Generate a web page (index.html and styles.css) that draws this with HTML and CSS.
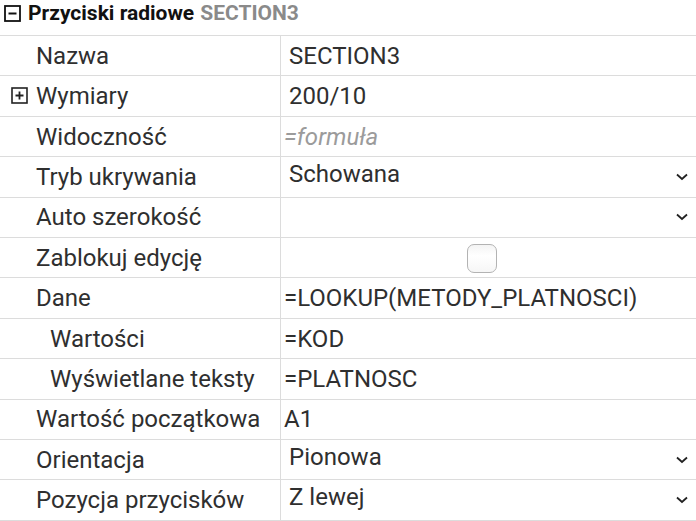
FILE: index.html
```html
<!DOCTYPE html>
<html lang="pl">
<head>
<meta charset="utf-8">
<link rel="stylesheet" href="styles.css">
</head>
<body>
<div class="panel">
  <div class="section-head">
    <svg class="box-icon" width="17" height="17" viewBox="0 0 17 17"><rect x="1" y="1" width="15" height="15" fill="none" stroke="#111" stroke-width="1.8"/><path d="M4.5 8.5h8" stroke="#111" stroke-width="2"/></svg>
    <span class="title">Przyciski radiowe</span>
    <span class="code">SECTION3</span>
  </div>
  <div class="grid">
    <div class="row"><div class="label">Nazwa</div><div class="value pad">SECTION3</div></div>
    <div class="row"><div class="label"><svg class="plus-icon" width="17" height="17" viewBox="0 0 17 17"><rect x="1" y="1" width="15" height="15" fill="none" stroke="#222" stroke-width="1.6"/><path d="M4.5 8.5h8M8.5 4.5v8" stroke="#222" stroke-width="1.8"/></svg>Wymiary</div><div class="value pad">200/10</div></div>
    <div class="row"><div class="label">Widoczność</div><div class="value formula placeholder">=formuła</div></div>
    <div class="row"><div class="label">Tryb ukrywania</div><div class="value select">Schowana<svg class="chev" width="12" height="8" viewBox="0 0 12 8"><path d="M1 1.5l5 4.5 5-4.5" fill="none" stroke="#222" stroke-width="1.8"/></svg></div></div>
    <div class="row"><div class="label">Auto szerokość</div><div class="value select"><span></span><svg class="chev" width="12" height="8" viewBox="0 0 12 8"><path d="M1 1.5l5 4.5 5-4.5" fill="none" stroke="#222" stroke-width="1.8"/></svg></div></div>
    <div class="row"><div class="label">Zablokuj edycję</div><div class="value center"><span class="checkbox"></span></div></div>
    <div class="row"><div class="label">Dane</div><div class="value formula">=LOOKUP(METODY_PLATNOSCI)</div></div>
    <div class="row"><div class="label sub">Wartości</div><div class="value formula">=KOD</div></div>
    <div class="row"><div class="label sub">Wyświetlane teksty</div><div class="value formula">=PLATNOSC</div></div>
    <div class="row"><div class="label">Wartość początkowa</div><div class="value formula">A1</div></div>
    <div class="row"><div class="label">Orientacja</div><div class="value select">Pionowa<svg class="chev" width="12" height="8" viewBox="0 0 12 8"><path d="M1 1.5l5 4.5 5-4.5" fill="none" stroke="#222" stroke-width="1.8"/></svg></div></div>
    <div class="row"><div class="label">Pozycja przycisków</div><div class="value select">Z lewej<svg class="chev" width="12" height="8" viewBox="0 0 12 8"><path d="M1 1.5l5 4.5 5-4.5" fill="none" stroke="#222" stroke-width="1.8"/></svg></div></div>
  </div>
</div>
</body>
</html>
```

FILE: styles.css
```css
html, body {
  margin: 0;
  padding: 0;
  background: #fff;
}
body {
  font-family: Roboto, "Liberation Sans", sans-serif;
  color: #2f2f2f;
}
.panel {
  width: 696px;
}
.section-head {
  height: 35px;
  box-sizing: border-box;
  display: flex;
  align-items: center;
  padding: 0 0 9px 4px;
  font-weight: 700;
  font-size: 21px;
}
.box-icon {
  margin-right: 7px;
  flex: none;
}
.title {
  color: #111;
}
.code {
  color: #8a8a8a;
  margin-left: 6px;
}
.grid {
  border-top: 1px solid #dcdcdc;
}
.row {
  display: grid;
  grid-template-columns: 281px 1fr;
  height: 40.42px;
  box-sizing: border-box;
  border-bottom: 1px solid #dcdcdc;
  font-size: 24px;
}
.label {
  display: flex;
  align-items: center;
  padding-left: 36px;
  border-right: 1px solid #dcdcdc;
  position: relative;
  white-space: nowrap;
}
.label.sub {
  padding-left: 50px;
}
.plus-icon {
  position: absolute;
  left: 11px;
  top: 11px;
}
.value {
  display: flex;
  align-items: center;
  min-width: 0;
  white-space: nowrap;
}
.pad {
  padding-left: 8px;
}
.formula {
  padding-left: 3px;
}
.placeholder {
  color: #9b9b9b;
  font-style: italic;
}
.select {
  padding-left: 8px;
  padding-right: 8px;
  justify-content: space-between;
  padding-bottom: 6px;
}
.select .chev {
  margin-top: 6px;
}
.center {
  justify-content: center;
}
.checkbox {
  width: 30px;
  height: 29px;
  box-sizing: border-box;
  border: 1px solid #b3b3b3;
  border-radius: 7px;
  background: linear-gradient(#f4f4f4, #fff 40%, #f6f6f6);
  margin-right: 14px;
  margin-top: 2px;
}
```
